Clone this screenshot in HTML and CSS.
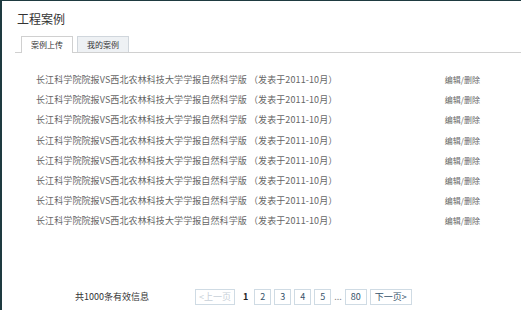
FILE: index.html
```html
<!DOCTYPE html>
<html lang="zh-CN">

<head>
    <meta charset="UTF-8">
    <meta name="viewport" content="width=device-width, initial-scale=1.0">
    <title>工程案例</title>
    <link rel="stylesheet" href="styles.css">
</head>

<body>

<div class="page">
    <h2 class="title">工程案例</h2>

    <div class="tabs">
        <a class="tab active" href="#">案例上传</a>
        <a class="tab" href="#">我的案例</a>
    </div>

    <ul class="cases">
        <li><span class="name">长江科学院院报VS西北农林科技大学学报自然科学版 （发表于2011-10月）</span><a href="#">编辑/删除</a></li>
        <li><span class="name">长江科学院院报VS西北农林科技大学学报自然科学版 （发表于2011-10月）</span><a href="#">编辑/删除</a></li>
        <li><span class="name">长江科学院院报VS西北农林科技大学学报自然科学版 （发表于2011-10月）</span><a href="#">编辑/删除</a></li>
        <li><span class="name">长江科学院院报VS西北农林科技大学学报自然科学版 （发表于2011-10月）</span><a href="#">编辑/删除</a></li>
        <li><span class="name">长江科学院院报VS西北农林科技大学学报自然科学版 （发表于2011-10月）</span><a href="#">编辑/删除</a></li>
        <li><span class="name">长江科学院院报VS西北农林科技大学学报自然科学版 （发表于2011-10月）</span><a href="#">编辑/删除</a></li>
        <li><span class="name">长江科学院院报VS西北农林科技大学学报自然科学版 （发表于2011-10月）</span><a href="#">编辑/删除</a></li>
        <li><span class="name">长江科学院院报VS西北农林科技大学学报自然科学版 （发表于2011-10月）</span><a href="#">编辑/删除</a></li>
    </ul>

    <div class="pager">
        <span class="total">共1000条有效信息</span>
        <span class="btn prev">&lt;上一页</span>
        <span class="current">1</span>
        <a class="btn" href="#">2</a>
        <a class="btn" href="#">3</a>
        <a class="btn" href="#">4</a>
        <a class="btn" href="#">5</a>
        <span class="dots">...</span>
        <a class="btn" href="#">80</a>
        <a class="btn next" href="#">下一页&gt;</a>
    </div>
</div>

</body>

</html>
```

FILE: styles.css
```css
html, body {
    margin: 0;
    padding: 0;
    height: 100%;
}

body {
    background-color: #fff;
    border-top: 1px solid #1e3a40;
    border-left: 2px solid #1e3a40;
    box-sizing: border-box;
    font-family: "Noto Sans CJK SC", "Liberation Sans", sans-serif;
    color: #666;
}

.page {
    padding-top: 10px;
}

.title {
    margin: 0 0 0 15px;
    font-size: 12px;
    font-weight: normal;
    line-height: 15px;
    color: #333;
}

.tabs {
    display: flex;
    gap: 4px;
    margin: 10px 0 0 13px;
    padding-left: 6px;
    border-bottom: 1px solid #d0d0d0;
    height: 16px;
}

.tab {
    display: block;
    width: 50px;
    height: 15px;
    line-height: 15px;
    text-align: center;
    font-size: 8px;
    color: #333;
    text-decoration: none;
    background-color: #eef1f4;
    border: 1px solid #d0d6dc;
    border-bottom: none;
}

.tab.active {
    background-color: #fff;
    height: 16px;
    border-color: #d0d0d0;
}

.cases {
    list-style: none;
    margin: 17px 0 0 0;
    padding: 0 41px 0 34px;
}

.cases li {
    display: flex;
    justify-content: space-between;
    height: 20.2px;
    line-height: 20px;
    font-size: 9px;
    letter-spacing: 0.1px;
}

.cases a {
    color: #666;
    text-decoration: none;
    font-size: 8px;
    letter-spacing: 0;
}

.pager {
    display: flex;
    align-items: center;
    gap: 3px;
    margin: 57px 0 0 73px;
    font-size: 9px;
}

.pager .total {
    color: #333;
    width: 117px;
}

.btn {
    display: block;
    height: 14px;
    line-height: 14px;
    padding: 0 5px;
    border: 1px solid #cfdbe4;
    color: #36526a;
    text-decoration: none;
}

.btn.prev {
    color: #c8d0d8;
    padding: 0 3px;
}

.btn.next {
    padding: 0 4px;
}

.current {
    font-weight: bold;
    color: #222;
    padding: 0 3px 0 5px;
}

.dots {
    color: #888;
}
```
